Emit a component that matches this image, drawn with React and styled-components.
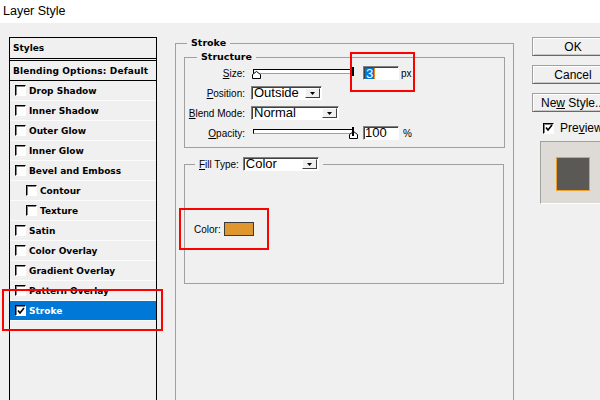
import React from 'react';
import styled, { createGlobalStyle } from 'styled-components';

const Global = createGlobalStyle`
  html, body { margin: 0; padding: 0; background: #f0f0f0; }
  body { width: 600px; height: 400px; overflow: hidden; font-family: "Liberation Sans", Arial, sans-serif; }
`;

const Window = styled.div`
  position: relative;
  width: 600px;
  height: 400px;
  overflow: hidden;
  background: #f0f0f0;
  display: flex;
  flex-direction: column;
`;

const TitleBar = styled.div`
  height: 23px;
  flex: none;
  background: #fff;
  display: flex;
  align-items: center;
  padding: 0 0 1px 3px;
  box-sizing: border-box;
  font: 12.5px "Liberation Sans", Arial, sans-serif;
  color: #000;
`;

const Body = styled.div`
  display: flex;
  align-items: flex-start;
  padding: 14px 0 0 9px;
`;

/* ---------- Styles list ---------- */
const StylesPanel = styled.div`
  flex: none;
  width: 146px;
  height: 400px;
  border: 1px solid #000;
  font-family: "DejaVu Sans", Verdana, sans-serif;
  font-weight: bold;
  font-size: 9px;
  color: #000;
`;

const PanelHeader = styled.div`
  height: 20px;
  display: flex;
  align-items: center;
  padding-left: 3px;
  border-bottom: 3px double #000;
`;

const BlendRow = styled.div`
  height: 19px;
  display: flex;
  align-items: center;
  padding-left: 3px;
  letter-spacing: 0.15px;
  border-bottom: 1px solid #000;
`;

const StyleRow = styled.div`
  height: 19px;
  display: flex;
  align-items: center;
  gap: 3px;
  padding-left: ${p => (p.$indent ? 16 : 5)}px;
  border-bottom: 1px solid #fcfcfc;
  background: ${p => (p.$selected ? '#0078d7' : 'transparent')};
  color: ${p => (p.$selected ? '#fff' : '#000')};
`;

const Box = styled.span`
  flex: none;
  position: relative;
  width: 9px;
  height: 9px;
  background: #fff;
  border-style: solid;
  border-width: 1px;
  border-color: #000 #fff #fff #000;
  box-shadow: inset 1px 1px #808080;
  display: flex;
  align-items: center;
  justify-content: center;
`;

const CheckBox = ({ checked }) => (
  <Box>
    {checked && (
      <svg width="8" height="8" viewBox="0 0 8 8">
        <polyline points="1,3.5 3,6 7,1" fill="none" stroke="#000" strokeWidth="1.6" />
      </svg>
    )}
  </Box>
);

/* ---------- Center groups ---------- */
const Group = styled.fieldset`
  margin: ${p => p.$margin || '0'};
  padding: 0;
  min-width: 0;
  width: ${p => p.$width}px;
  box-sizing: border-box;
  border: 1px solid #a0a0a0;
  flex: none;
`;

const StrokeGroup = styled(Group)`
  height: 420px;
  margin-left: 18px;
`;

const Legend = styled.legend`
  margin-left: ${p => p.$offset}px;
  padding: 0 4px;
  font: bold 9.5px "DejaVu Sans", Verdana, sans-serif;
  line-height: 12px;
  color: #000;
`;

const FillLegend = styled.legend`
  margin-left: 10px;
  padding: 0 4px;
  height: 14px;
  display: flex;
  align-items: center;
  gap: 4px;
`;

const GroupBody = styled.div`
  padding: 2px 8px 0 8px;
`;

const StructureRows = styled.div`
  padding-bottom: 4px;
`;

const Row = styled.div`
  height: 20px;
  display: flex;
  align-items: center;
`;

const Label = styled.span`
  font: 10px "Liberation Sans", Arial, sans-serif;
  color: #000;
  white-space: nowrap;
  ${p => p.$width && `width: ${p.$width}px; text-align: right;`}
  u { text-decoration-thickness: 1px; text-underline-offset: 1px; }
`;

const Unit = styled.span`
  font: 10px "Liberation Sans", Arial, sans-serif;
  margin-left: ${p => p.$gap}px;
  color: #000;
`;

const Track = styled.div`
  position: relative;
  width: 98px;
  height: 3px;
  margin: -3px 0 0 8px;
  background: #fff;
  border-style: solid;
  border-width: 1px;
  border-color: #000 #808080 #a0a0a0 #000;
  &::after {
    content: '';
    position: absolute;
    right: -2px;
    top: -3px;
    width: 2px;
    height: 9px;
    background: #000;
  }
`;

const Thumb = styled.svg`
  position: absolute;
  top: 1px;
  left: ${p => p.$at}px;
`;

const Slider = ({ at }) => (
  <Track>
    <Thumb $at={at} width="9" height="8" viewBox="0 0 9 8">
      <path d="M0.5 7.5 V3.5 L4.5 0.5 L8.5 3.5 V7.5 Z" fill="#fff" stroke="#000" strokeWidth="1" />
    </Thumb>
  </Track>
);

const Field = styled.div`
  width: 33px;
  height: 12px;
  margin-left: ${p => p.$gap}px;
  background: #fff;
  border-style: solid;
  border-width: 1px;
  border-color: #808080 #fff #fff #808080;
  box-shadow: inset 1px 1px #404040;
  display: flex;
  align-items: center;
  padding-left: 1px;
  font: 13px "Liberation Sans", Arial, sans-serif;
  line-height: 12px;
  color: #000;
`;

const Selected = styled.span`
  background: #0078d7;
  color: #fff;
  padding: 0 1px;
  line-height: 11px;
  border-right: 1px solid #f08a1c;
`;

const SelectBox = styled.div`
  width: ${p => p.$width}px;
  height: 12px;
  margin-left: ${p => p.$gap || 0}px;
  box-sizing: content-box;
  background: #fff;
  border-style: solid;
  border-width: 1px;
  border-color: #808080 #fff #fff #808080;
  box-shadow: inset 1px 1px #404040;
  display: flex;
  align-items: center;
  justify-content: space-between;
  padding-left: 2px;
  font: 13px "Liberation Sans", Arial, sans-serif;
  line-height: 12px;
  color: #000;
`;

const DropButton = styled.span`
  width: 13px;
  height: 8px;
  margin-right: 1px;
  background: #f0f0f0;
  border-style: solid;
  border-width: 1px;
  border-color: #fff #404040 #404040 #fff;
  display: flex;
  align-items: center;
  justify-content: center;
`;

const Select = ({ width, gap, children }) => (
  <SelectBox $width={width} $gap={gap}>
    <span>{children}</span>
    <DropButton>
      <svg width="5" height="3" viewBox="0 0 5 3">
        <path d="M0 0 H5 L2.5 3 Z" fill="#000" />
      </svg>
    </DropButton>
  </SelectBox>
);

const FillBody = styled.div`
  height: 112px;
  box-sizing: border-box;
  padding: 51px 0 0 9px;
`;

const ColorRow = styled.div`
  display: flex;
  align-items: center;
  gap: 3px;
`;

const Swatch = styled.span`
  width: 28px;
  height: 12px;
  background: #e0962e;
  border: 1px solid #3a3a3a;
`;

/* ---------- Right column ---------- */
const RightColumn = styled.div`
  margin-left: 18px;
  display: flex;
  flex-direction: column;
  flex: none;
`;

const Buttons = styled.div`
  display: flex;
  flex-direction: column;
  gap: 9px;
`;

const Button = styled.button`
  width: 82px;
  height: 19px;
  padding: 0;
  background: #f0f0f0;
  border: 1px solid #a0a0a0;
  border-bottom-color: #696969;
  border-right-color: #696969;
  box-shadow: inset 1px 1px #fff, inset -1px -1px #c8c8c8;
  font: 12px "Liberation Sans", Arial, sans-serif;
  color: #000;
  white-space: nowrap;
  u { text-underline-offset: 1px; }
`;

const PreviewToggle = styled.div`
  display: flex;
  align-items: center;
  gap: 6px;
  margin: 9px 0 0 11px;
  font: 12px "Liberation Sans", Arial, sans-serif;
  color: #000;
`;

const PreviewBox = styled.div`
  margin: 6px 0 0 8px;
  width: 70px;
  height: 63px;
  background: #dedbd6;
  border-style: solid;
  border-width: 1px;
  border-color: #a0a0a0 #fff #fff #a0a0a0;
  padding: 15px 0 0 15px;
  box-sizing: border-box;
`;

const PreviewSquare = styled.div`
  width: 32px;
  height: 32px;
  background: #5a5955;
  border: 1px solid #f0a030;
`;

/* ---------- Overlays ---------- */
const Highlight = styled.div`
  position: absolute;
  left: ${p => p.$x}px;
  top: ${p => p.$y}px;
  width: ${p => p.$w}px;
  height: ${p => p.$h}px;
  box-sizing: border-box;
  border: 2px solid #ff0000;
  pointer-events: none;
`;

const styleItems = [
  { name: 'Drop Shadow' },
  { name: 'Inner Shadow' },
  { name: 'Outer Glow' },
  { name: 'Inner Glow' },
  { name: 'Bevel and Emboss' },
  { name: 'Contour', indent: true },
  { name: 'Texture', indent: true },
  { name: 'Satin' },
  { name: 'Color Overlay' },
  { name: 'Gradient Overlay' },
  { name: 'Pattern Overlay' },
  { name: 'Stroke', checked: true, selected: true },
];

export default function App() {
  return (
    <Window>
      <Global />
      <TitleBar>Layer Style</TitleBar>
      <Body>
        <StylesPanel>
          <PanelHeader>Styles</PanelHeader>
          <BlendRow>Blending Options: Default</BlendRow>
          {styleItems.map(item => (
            <StyleRow key={item.name} $indent={item.indent} $selected={item.selected}>
              <CheckBox checked={item.checked} />
              {item.name}
            </StyleRow>
          ))}
        </StylesPanel>

        <StrokeGroup $width={339}>
          <Legend $offset={11}>Stroke</Legend>
          <GroupBody>
            <Group $width={321}>
              <Legend $offset={12}>Structure</Legend>
              <StructureRows>
                <Row>
                  <Label $width={60}><u>S</u>ize:</Label>
                  <Slider at={-2} />
                  <Field $gap={10}><Selected>3</Selected></Field>
                  <Unit $gap={2}>px</Unit>
                </Row>
                <Row>
                  <Label $width={60}><u>P</u>osition:</Label>
                  <Select width={67} gap={6}>Outside</Select>
                </Row>
                <Row>
                  <Label $width={60}><u>B</u>lend Mode:</Label>
                  <Select width={84} gap={6}>Normal</Select>
                </Row>
                <Row>
                  <Label $width={60}><u>O</u>pacity:</Label>
                  <Slider at={95} />
                  <Field $gap={10}>100</Field>
                  <Unit $gap={4}>%</Unit>
                </Row>
              </StructureRows>
            </Group>

            <Group $width={320} $margin="9px 0 0 0">
              <FillLegend>
                <Label><u>F</u>ill Type:</Label>
                <Select width={72}>Color</Select>
              </FillLegend>
              <FillBody>
                <ColorRow>
                  <Label>Color:</Label>
                  <Swatch />
                </ColorRow>
              </FillBody>
            </Group>
          </GroupBody>
        </StrokeGroup>

        <RightColumn>
          <Buttons>
            <Button>OK</Button>
            <Button>Cancel</Button>
            <Button>Ne<u>w</u> Style...</Button>
          </Buttons>
          <PreviewToggle>
            <CheckBox checked />
            <span>Pre<u>v</u>iew</span>
          </PreviewToggle>
          <PreviewBox>
            <PreviewSquare />
          </PreviewBox>
        </RightColumn>
      </Body>

      <Highlight $x={350} $y={52} $w={65} $h={40} />
      <Highlight $x={179} $y={208} $w={90} $h={42} />
      <Highlight $x={2} $y={289} $w={161} $h={42} />
    </Window>
  );
}
